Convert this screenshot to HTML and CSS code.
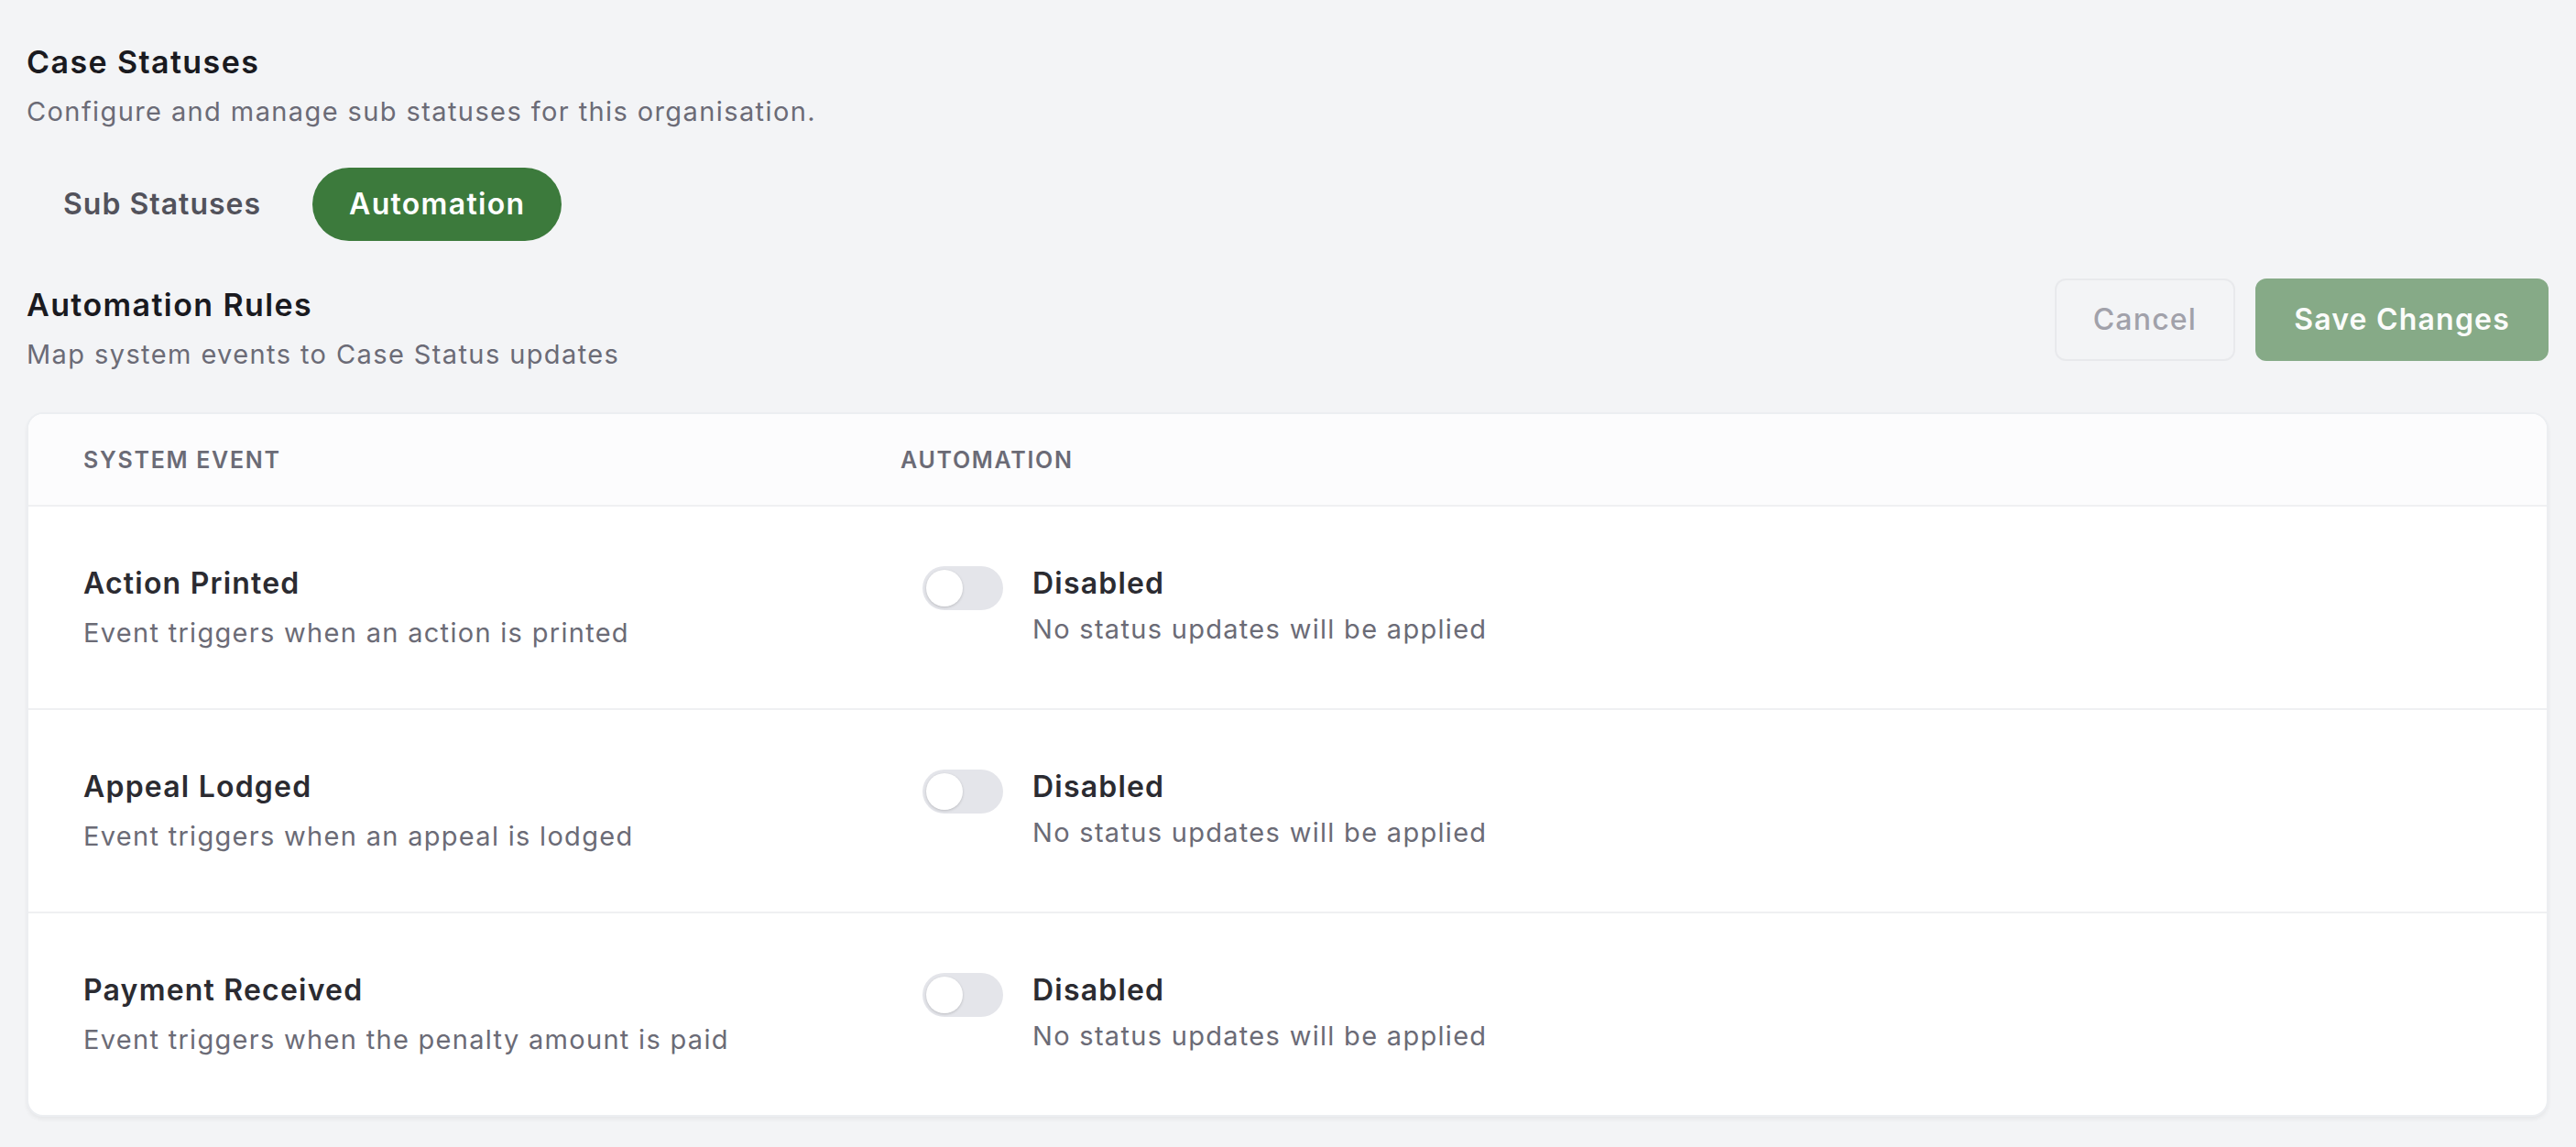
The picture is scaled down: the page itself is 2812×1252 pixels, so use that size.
FILE: index.html
```html
<!DOCTYPE html>
<html lang="en">
<head>
<meta charset="utf-8">
<title>Case Statuses</title>
<link rel="stylesheet" href="styles.css">
</head>
<body>
<main class="page">
  <header class="page-head">
    <h1 class="title">Case Statuses</h1>
    <p class="subtitle">Configure and manage sub statuses for this organisation.</p>
  </header>

  <nav class="tabs">
    <button class="tab">Sub Statuses</button>
    <button class="tab tab-active">Automation</button>
  </nav>

  <section class="section-head">
    <div class="section-text">
      <h2 class="title">Automation Rules</h2>
      <p class="subtitle">Map system events to Case Status updates</p>
    </div>
    <div class="actions">
      <button class="btn btn-cancel">Cancel</button>
      <button class="btn btn-save">Save Changes</button>
    </div>
  </section>

  <div class="card">
    <div class="row row-head">
      <div class="cell-event th">System Event</div>
      <div class="cell-auto th">Automation</div>
    </div>

    <div class="row">
      <div class="cell-event">
        <div class="ev-name">Action Printed</div>
        <div class="ev-desc">Event triggers when an action is printed</div>
      </div>
      <div class="cell-auto">
        <span class="toggle"><span class="knob"></span></span>
        <div class="auto-text">
          <div class="auto-state">Disabled</div>
          <div class="auto-desc">No status updates will be applied</div>
        </div>
      </div>
    </div>

    <div class="row">
      <div class="cell-event">
        <div class="ev-name">Appeal Lodged</div>
        <div class="ev-desc">Event triggers when an appeal is lodged</div>
      </div>
      <div class="cell-auto">
        <span class="toggle"><span class="knob"></span></span>
        <div class="auto-text">
          <div class="auto-state">Disabled</div>
          <div class="auto-desc">No status updates will be applied</div>
        </div>
      </div>
    </div>

    <div class="row">
      <div class="cell-event">
        <div class="ev-name">Payment Received</div>
        <div class="ev-desc">Event triggers when the penalty amount is paid</div>
      </div>
      <div class="cell-auto">
        <span class="toggle"><span class="knob"></span></span>
        <div class="auto-text">
          <div class="auto-state">Disabled</div>
          <div class="auto-desc">No status updates will be applied</div>
        </div>
      </div>
    </div>
  </div>
</main>
</body>
</html>
```
FILE: styles.css
```css
* { box-sizing: border-box; }

html, body {
  margin: 0;
  padding: 0;
  background: #f3f4f6;
}

body {
  font-family: "Inter", "Noto Sans", "Liberation Sans", sans-serif;
  color: #1c1c20;
}

.page {
  padding: 44px 30px 30px 29px;
}

.title {
  margin: 0;
  font-size: 34px;
  line-height: 48px;
  font-weight: 600;
  letter-spacing: 1.4px;
  color: #1a1a1f;
}

.subtitle {
  margin: 10px 0 0;
  font-size: 29px;
  line-height: 40px;
  font-weight: 400;
  letter-spacing: 1.4px;
  color: #6b6b76;
}

.tabs {
  display: flex;
  gap: 16px;
  margin-top: 41px;
}

.tab {
  font-family: inherit;
  font-size: 32px;
  line-height: 48px;
  font-weight: 600;
  letter-spacing: 1px;
  padding: 16px 40px;
  border: 0;
  border-radius: 40px;
  background: transparent;
  color: #52525b;
}

.tab-active {
  background: #3c7a3c;
  color: #ffffff;
  letter-spacing: 1.3px;
}

.section-head {
  display: flex;
  justify-content: space-between;
  align-items: flex-start;
  margin-top: 41px;
}

.section-text {
  padding-top: 5px;
}

.actions {
  display: flex;
  gap: 22px;
}

.btn {
  font-family: inherit;
  font-size: 32px;
  line-height: 48px;
  font-weight: 600;
  letter-spacing: 1.2px;
  padding: 19px 40px;
  border-radius: 12px;
  border: 2px solid transparent;
}

.btn-cancel {
  background: #f3f4f6;
  border-color: #e8e9ec;
  color: #a1a1aa;
  font-weight: 500;
}

.btn-save {
  background: #86aa87;
  border-color: #86aa87;
  color: #fbfcfb;
}

.card {
  margin-top: 43px;
  background: #ffffff;
  border: 2px solid #eceef1;
  border-radius: 18px;
  box-shadow: 0 3px 4px rgba(0, 0, 0, 0.05);
  overflow: hidden;
}

.row {
  display: grid;
  grid-template-columns: 892px 1fr;
  padding: 60px 0 62px 60px;
  border-top: 2px solid #eff0f2;
}

.row-head {
  border-top: 0;
  background: #fcfcfd;
  padding: 0 0 0 60px;
  height: 99px;
  align-items: center;
}

.th {
  font-size: 25px;
  line-height: 36px;
  font-weight: 600;
  letter-spacing: 1.7px;
  text-transform: uppercase;
  color: #6b6b76;
}

.ev-name {
  font-size: 32px;
  line-height: 48px;
  font-weight: 600;
  letter-spacing: 1.2px;
  color: #2b2b31;
}

.ev-desc {
  margin-top: 10px;
  font-size: 29px;
  line-height: 40px;
  letter-spacing: 1.3px;
  color: #6b6b76;
}

.cell-auto {
  display: flex;
  align-items: flex-start;
}

.row-head .cell-auto { display: block; }

.toggle {
  position: relative;
  flex: none;
  width: 88px;
  height: 48px;
  margin: 5px 32px 0 24px;
  border-radius: 24px;
  background: #e4e5ea;
}

.knob {
  position: absolute;
  top: 4px;
  left: 4px;
  width: 40px;
  height: 40px;
  border-radius: 50%;
  background: #ffffff;
  box-shadow: 0 1px 3px rgba(0, 0, 0, 0.18);
}

.auto-state {
  font-size: 32px;
  line-height: 48px;
  font-weight: 600;
  letter-spacing: 1.2px;
  color: #2b2b31;
}

.auto-desc {
  margin-top: 6px;
  font-size: 29px;
  line-height: 40px;
  letter-spacing: 1.3px;
  color: #6b6b76;
}
```
